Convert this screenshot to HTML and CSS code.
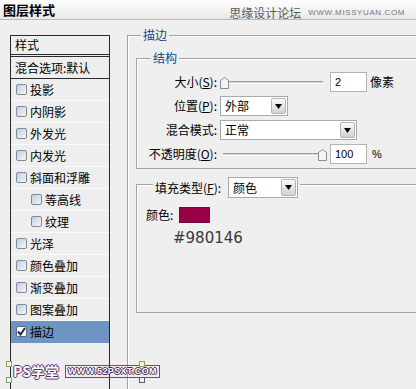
FILE: index.html
```html
<!DOCTYPE html>
<html lang="zh-CN">
<head>
    <meta charset="UTF-8">
    <meta name="viewport" content="width=device-width, initial-scale=1.0">
    <title>图层样式</title>
    <link rel="stylesheet" href="styles.css">
</head>
<body>
    <header class="titlebar">
        <h1>图层样式</h1>
        <div class="site-mark">
            <span class="site-cn">思缘设计论坛</span>
            <span class="site-url">WWW.MISSYUAN.COM</span>
        </div>
    </header>

    <main class="dialog">
        <ul class="style-list">
            <li class="list-head">样式</li>
            <li class="list-blend">混合选项:默认</li>
            <li class="item"><span class="check"></span>投影</li>
            <li class="item"><span class="check"></span>内阴影</li>
            <li class="item"><span class="check"></span>外发光</li>
            <li class="item"><span class="check"></span>内发光</li>
            <li class="item"><span class="check"></span>斜面和浮雕</li>
            <li class="item sub"><span class="check"></span>等高线</li>
            <li class="item sub"><span class="check"></span>纹理</li>
            <li class="item"><span class="check"></span>光泽</li>
            <li class="item"><span class="check"></span>颜色叠加</li>
            <li class="item"><span class="check"></span>渐变叠加</li>
            <li class="item"><span class="check"></span>图案叠加</li>
            <li class="item active">
                <span class="check checked">
                    <svg width="9" height="9" viewBox="0 0 9 9"><path d="M1 4.5 L3.5 7.5 L8 1" fill="none" stroke="#1d2b40" stroke-width="2"/></svg>
                </span>描边
            </li>
        </ul>

        <fieldset class="group outer">
            <legend>描边</legend>

            <fieldset class="group structure">
                <legend>结构</legend>

                <div class="row">
                    <label>大小(<u>S</u>):</label>
                    <div class="control">
                        <div class="slider">
                            <span class="track"></span>
                            <span class="thumb" style="left: 0px;">
                                <svg width="9" height="12" viewBox="0 0 9 12"><path d="M0.5 3.5 L4.5 0.5 L8.5 3.5 V11.5 H0.5 Z" fill="#f4f4f4" stroke="#8c8c8c"/></svg>
                            </span>
                        </div>
                        <span class="num">2</span>
                        <span class="unit">像素</span>
                    </div>
                </div>

                <div class="row">
                    <label>位置(<u>P</u>):</label>
                    <div class="control">
                        <div class="select select-short">
                            <span class="value">外部</span>
                            <span class="drop"><svg width="7" height="5" viewBox="0 0 7 5"><path d="M0 0 H7 L3.5 5 Z" fill="#000"/></svg></span>
                        </div>
                    </div>
                </div>

                <div class="row">
                    <label>混合模式:</label>
                    <div class="control">
                        <div class="select select-long">
                            <span class="value">正常</span>
                            <span class="drop"><svg width="7" height="5" viewBox="0 0 7 5"><path d="M0 0 H7 L3.5 5 Z" fill="#000"/></svg></span>
                        </div>
                    </div>
                </div>

                <div class="row">
                    <label>不透明度(<u>O</u>):</label>
                    <div class="control">
                        <div class="slider">
                            <span class="track"></span>
                            <span class="thumb" style="left: 98px;">
                                <svg width="9" height="12" viewBox="0 0 9 12"><path d="M0.5 3.5 L4.5 0.5 L8.5 3.5 V11.5 H0.5 Z" fill="#f4f4f4" stroke="#8c8c8c"/></svg>
                            </span>
                        </div>
                        <span class="num">100</span>
                        <span class="unit unit-pct">%</span>
                    </div>
                </div>
            </fieldset>

            <fieldset class="group fill">
                <legend>
                    <span class="fill-label">填充类型(<u>F</u>):</span>
                    <span class="select select-fill">
                        <span class="value">颜色</span>
                        <span class="drop"><svg width="7" height="5" viewBox="0 0 7 5"><path d="M0 0 H7 L3.5 5 Z" fill="#000"/></svg></span>
                    </span>
                </legend>

                <div class="color-row">
                    <span>颜色:</span>
                    <span class="swatch"></span>
                </div>
                <div class="hex">#980146</div>
            </fieldset>
        </fieldset>
    </main>

    <div class="watermark">
        <span class="wm-logo">PS学堂</span>
        <span class="wm-url">WWW.52PSXT.COM</span>
    </div>
    <span class="corner c1"></span>
    <span class="corner c2"></span>
    <span class="corner c3"></span>
    <span class="corner c4"></span>
</body>
</html>
```

FILE: styles.css
```css
* {
    box-sizing: border-box;
}

html {
    overflow: hidden;
}

body {
    margin: 0;
    width: 416px;
    height: 389px;
    overflow: hidden;
    position: relative;
    background-color: #efefef;
    color: #000;
    font-family: "Noto Sans CJK SC", "Noto Sans", sans-serif;
    font-size: 12px;
    line-height: 16px;
}

/* title bar */
.titlebar {
    display: flex;
    justify-content: space-between;
    height: 20px;
    padding: 0 11px 0 3px;
    background: linear-gradient(#ffffff, #e8e8e8);
    border-bottom: 1px solid #b9b9b9;
}

.titlebar h1 {
    margin: 0;
    font-size: 13px;
    line-height: 19px;
    font-weight: bold;
}

.site-mark {
    display: flex;
    align-items: center;
    padding-top: 7px;
    color: #5c5c5c;
}

.site-url {
    margin-left: 7px;
    font-family: "Liberation Sans", sans-serif;
    font-size: 8px;
    letter-spacing: 0.6px;
    color: #777;
}

/* dialog */
.dialog {
    display: flex;
    align-items: flex-start;
    height: 369px;
}

.style-list {
    list-style: none;
    margin: 15px 0 0 10px;
    padding: 0;
    width: 100px;
    height: 354px;
    flex-shrink: 0;
    border: 1px solid #2a2a2a;
    border-bottom: none;
    background-color: #eeeeee;
}

.style-list li {
    display: flex;
    align-items: center;
    padding-left: 4px;
}

.list-head {
    height: 21px;
    border-bottom: 3px double #2a2a2a;
}

.list-blend {
    height: 22px;
    border-bottom: 1px solid #2a2a2a;
}

.style-list .item {
    height: 22px;
    padding-left: 5px;
    border-bottom: 1px solid #f9f9f9;
}

.style-list .sub {
    padding-left: 20px;
}

.style-list .active {
    background-color: #6d94c3;
    border-bottom-color: #6d94c3;
}

.check {
    display: flex;
    align-items: center;
    justify-content: center;
    width: 11px;
    height: 11px;
    margin-right: 3px;
    border: 1px solid #7d8a9b;
    border-radius: 2px;
    background: linear-gradient(135deg, #c3cdda, #f5f7fa);
}

.check.checked {
    background: #fbfbfb;
    border-color: #5d6b7e;
}

/* group boxes */
.group {
    margin: 0;
    padding: 0;
    min-width: 0;
    border: 1px solid #a3a3a3;
    border-right: none;
    box-shadow: inset 1px 1px 0 #fff;
}

.group legend {
    padding: 0 2px;
    line-height: 16px;
    color: #17498a;
    background-color: #efefef;
}

.outer {
    margin: 7px 0 0 17px;
    padding: 0 0 0 8px;
    width: 289px;
    height: 362px;
    flex-shrink: 0;
    border-bottom: none;
}

.outer > legend {
    margin-left: 5px;
}

.structure {
    margin-top: 7px;
    padding: 6px 0 4px 0;
}

.structure > legend {
    margin-left: 14px;
}

.row {
    display: grid;
    grid-template-columns: 80px 1fr;
    column-gap: 3px;
    align-items: center;
    height: 20px;
    margin-bottom: 4px;
}

.row:last-child {
    margin-bottom: 0;
}

.row label {
    text-align: right;
    white-space: nowrap;
}

.control {
    display: flex;
    align-items: center;
}

.slider {
    position: relative;
    width: 107px;
    height: 20px;
    margin-right: 3px;
}

.track {
    display: block;
    height: 3px;
    margin: 9px 4px 0 3px;
    border-top: 1px solid #9a9a9a;
    border-bottom: 1px solid #ffffff;
    background-color: #d6d6d6;
}

.thumb {
    position: absolute;
    top: 5px;
    display: block;
    width: 9px;
    height: 12px;
}

.thumb svg {
    display: block;
}

.num {
    display: flex;
    align-items: center;
    width: 37px;
    height: 20px;
    padding-left: 4px;
    border: 1px solid #b4b4b4;
    background-color: #fff;
    font-family: "Liberation Sans", sans-serif;
    font-size: 11px;
}

.unit {
    margin-left: 3px;
}

.unit-pct {
    margin-left: 5px;
    font-family: "Liberation Sans", sans-serif;
    font-size: 11px;
}

.select {
    display: flex;
    align-items: center;
    height: 20px;
    border: 1px solid #a9a9a9;
    background-color: #fff;
    color: #000;
}

.select .value {
    flex: 1;
    padding-left: 4px;
}

.select .drop {
    display: flex;
    align-items: center;
    justify-content: center;
    width: 15px;
    height: 16px;
    margin-right: 1px;
    border: 1px solid #b3b3b3;
    border-radius: 2px;
    background: linear-gradient(#fafafa, #d2d2d2);
}

.select-short {
    width: 68px;
}

.select-long {
    width: 137px;
}

/* fill */
.fill {
    margin-top: 1px;
    padding: 9px 0 66px 0;
}

.fill > legend {
    display: flex;
    align-items: center;
    margin-left: 16px;
    padding-top: 7px;
    color: #000;
}

.fill-label {
    margin-right: 7px;
}

.select-fill {
    width: 70px;
    height: 21px;
}

.select-fill .drop {
    height: 17px;
}

.color-row {
    display: flex;
    align-items: center;
    height: 16px;
    padding-left: 9px;
}

.swatch {
    width: 31px;
    height: 16px;
    margin-left: 6px;
    background-color: #980146;
    border: 1px solid #7a0638;
}

.hex {
    margin-top: 7px;
    padding-left: 36px;
    font-family: "DejaVu Sans", sans-serif;
    font-size: 15px;
    line-height: 16px;
    color: #383838;
}

/* watermark overlay */
.watermark {
    position: absolute;
    left: 13px;
    top: 363px;
    display: flex;
    align-items: center;
}

.wm-logo {
    font-size: 14px;
    font-weight: bold;
    color: #fff;
    text-shadow: 1px 0 0 #5b2e72, -1px 0 0 #5b2e72, 0 1px 0 #5b2e72, 0 -1px 0 #5b2e72;
}

.wm-url {
    margin-left: 6px;
    padding: 0 2px;
    font-family: "Liberation Sans", sans-serif;
    font-size: 9px;
    font-weight: bold;
    line-height: 11px;
    letter-spacing: 0.4px;
    color: #fff;
    border: 1px solid #6b4a7c;
    text-shadow: 1px 0 0 #4a2a5c, -1px 0 0 #4a2a5c, 0 1px 0 #4a2a5c, 0 -1px 0 #4a2a5c;
}

.corner {
    position: absolute;
    width: 6px;
    height: 6px;
    border: 1px solid #8da071;
    background-color: #f4f4ea;
}

.c1 { left: 6px; top: 361px; }
.c2 { left: 6px; top: 377px; border-color: #6fa86a; }
.c3 { left: 139px; top: 361px; border-color: #9a9a68; }
.c4 { left: 139px; top: 377px; border-color: #4e5a6e; }
```
